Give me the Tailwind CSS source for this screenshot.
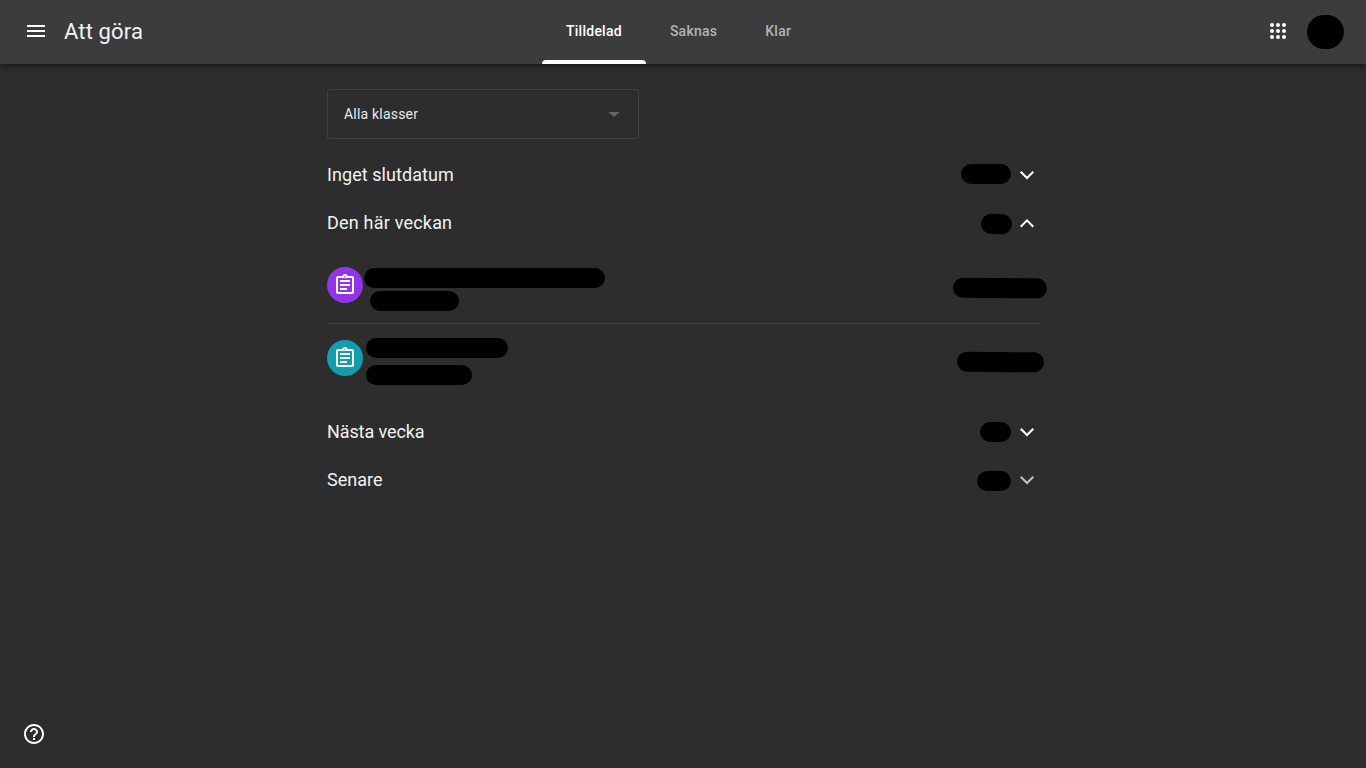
<!DOCTYPE html>
<html lang="sv">
<head>
    <meta charset="UTF-8">
    <meta name="viewport" content="width=device-width, initial-scale=1.0">
    <title>Att göra</title>
    <script src="https://cdn.jsdelivr.net/npm/@tailwindcss/browser@4"></script>
</head>
<body class="bg-[#2d2d2d] font-['Roboto','Liberation_Sans',sans-serif] text-[#f1f3f4] h-[768px] overflow-hidden">
    <!-- Top bar -->
    <header class="relative z-10 flex items-start h-16 bg-[#3c3c3c] shadow-[0_2px_6px_rgba(0,0,0,0.5)]">
        <div class="flex items-center w-[542px] h-[62px] pl-6">
            <svg class="w-6 h-6 text-white" viewBox="0 0 24 24" fill="currentColor"><path d="M3 18h18v-2H3v2zm0-5h18v-2H3v2zm0-7v2h18V6H3z"/></svg>
            <span class="ml-4 mt-[2px] text-[22px] leading-7 tracking-[0.15px] text-[#f1f3f4]">Att göra</span>
        </div>
        <nav class="flex h-16 text-sm font-medium tracking-[0.25px]">
            <a class="relative flex items-center h-[62px] px-6 text-white">
                Tilldelad
                <span class="absolute left-0 right-0 top-[60px] h-1 bg-white rounded-t-[4px]"></span>
            </a>
            <a class="flex items-center h-[62px] px-6 text-[#b0b3b6]">Saknas</a>
            <a class="flex items-center h-[62px] px-6 text-[#b0b3b6]">Klar</a>
        </nav>
        <div class="flex items-center ml-auto h-[62px] pr-[22px]">
            <svg class="w-6 h-6 text-white" viewBox="0 0 24 24" fill="currentColor"><circle cx="6" cy="6" r="2"/><circle cx="12" cy="6" r="2"/><circle cx="18" cy="6" r="2"/><circle cx="6" cy="12" r="2"/><circle cx="12" cy="12" r="2"/><circle cx="18" cy="12" r="2"/><circle cx="6" cy="18" r="2"/><circle cx="12" cy="18" r="2"/><circle cx="18" cy="18" r="2"/></svg>
            <div class="w-[37px] h-[34px] ml-[17px] mt-[2px] bg-black rounded-full"></div>
        </div>
    </header>

    <main class="w-[713px] ml-[327px] pt-[25px]">
        <!-- Class filter -->
        <div class="flex items-center justify-between w-[312px] h-[50px] pl-4 pr-[18px] border border-[#404040] rounded-[2px]">
            <span class="text-sm tracking-[0.2px] text-[#e8eaed]">Alla klasser</span>
            <span class="w-0 h-0 border-x-[6px] border-x-transparent border-t-[5px] border-t-[#5f6368]"></span>
        </div>

        <!-- Inget slutdatum -->
        <div class="flex items-center justify-between h-12 mt-[12px]">
            <span class="text-lg tracking-[0.07px]">Inget slutdatum</span>
            <div class="flex items-center pr-[1px]">
                <div class="w-[50px] h-5 mb-[2px] bg-black rounded-full"></div>
                <svg class="w-6 h-6 ml-1 text-white" viewBox="0 0 24 24" fill="currentColor"><path d="M6.41 8 12 13.59 17.59 8 19 9.41l-7 7-7-7z"/></svg>
            </div>
        </div>

        <!-- Den här veckan -->
        <div class="flex items-center justify-between h-12">
            <span class="text-lg tracking-[0.2px]">Den här veckan</span>
            <div class="flex items-center pr-[1px]">
                <div class="w-[31px] h-5 mt-[1px] bg-black rounded-full rotate-[2deg]"></div>
                <svg class="w-6 h-6 ml-[3px] text-white" viewBox="0 0 24 24" fill="currentColor"><path d="M6.41 16.41 12 10.83l5.59 5.58L19 15l-7-7-7 7z"/></svg>
            </div>
        </div>

        <!-- Assignments -->
        <div class="flex items-center h-[77px] border-b border-[#444444]">
            <div class="flex items-center justify-center w-9 h-9 rounded-full bg-[#9334e6] shrink-0">
                <svg class="w-6 h-6 text-white" viewBox="0 0 24 24" fill="currentColor"><path d="M19 3h-4.18C14.4 1.84 13.3 1 12 1s-2.4.84-2.82 2H5c-1.1 0-2 .9-2 2v14c0 1.1.9 2 2 2h14c1.1 0 2-.9 2-2V5c0-1.1-.9-2-2-2zm-7-.25c.41 0 .75.34.75.75s-.34.75-.75.75-.75-.34-.75-.75.34-.75.75-.75zM19 19H5V5h14v14zM7 15h7v2H7zm0-4h10v2H7zm0-4h10v2H7z"/></svg>
            </div>
            <div class="flex flex-col gap-[3px] ml-px mb-[-9px]">
                <div class="w-[241px] h-5 bg-black rounded-full"></div>
                <div class="w-[89px] h-5 ml-[6px] bg-black rounded-full"></div>
            </div>
            <div class="w-[94px] h-5 ml-auto mr-[-7px] mt-[5px] bg-black rounded-full rotate-[0.5deg]"></div>
        </div>
        <div class="flex items-center h-[84px]">
            <div class="flex items-center justify-center w-9 h-9 mb-[16px] rounded-full bg-[#129eaf] shrink-0">
                <svg class="w-6 h-6 text-white" viewBox="0 0 24 24" fill="currentColor"><path d="M19 3h-4.18C14.4 1.84 13.3 1 12 1s-2.4.84-2.82 2H5c-1.1 0-2 .9-2 2v14c0 1.1.9 2 2 2h14c1.1 0 2-.9 2-2V5c0-1.1-.9-2-2-2zm-7-.25c.41 0 .75.34.75.75s-.34.75-.75.75-.75-.34-.75-.75.34-.75.75-.75zM19 19H5V5h14v14zM7 15h7v2H7zm0-4h10v2H7zm0-4h10v2H7z"/></svg>
            </div>
            <div class="flex flex-col gap-[7px] ml-[3px] mb-[9px]">
                <div class="w-[142px] h-5 bg-black rounded-full"></div>
                <div class="w-[106px] h-5 bg-black rounded-full"></div>
            </div>
            <div class="w-[87px] h-5 ml-auto mr-[-4px] mb-[9px] bg-black rounded-full rotate-[0.5deg]"></div>
        </div>

        <!-- Nästa vecka -->
        <div class="flex items-center justify-between h-12">
            <span class="text-lg tracking-[-0.1px]">Nästa vecka</span>
            <div class="flex items-center pr-[1px]">
                <div class="w-[31px] h-5 bg-black rounded-full"></div>
                <svg class="w-6 h-6 ml-1 text-white" viewBox="0 0 24 24" fill="currentColor"><path d="M6.41 8 12 13.59 17.59 8 19 9.41l-7 7-7-7z"/></svg>
            </div>
        </div>

        <!-- Senare -->
        <div class="flex items-center justify-between h-12">
            <span class="text-lg">Senare</span>
            <div class="flex items-center pr-[1px]">
                <div class="w-[34px] h-5 mt-[2px] bg-black rounded-full"></div>
                <svg class="w-6 h-6 ml-1 text-[#bdc1c6]" viewBox="0 0 24 24" fill="currentColor"><path d="M6.41 8 12 13.59 17.59 8 19 9.41l-7 7-7-7z"/></svg>
            </div>
        </div>
    </main>

    <!-- Help -->
    <svg class="fixed left-[22px] top-[722px] w-6 h-6 text-white" viewBox="0 0 24 24" fill="currentColor"><path d="M11 18h2v-2h-2v2zm1-16C6.48 2 2 6.48 2 12s4.48 10 10 10 10-4.48 10-10S17.52 2 12 2zm0 18c-4.41 0-8-3.59-8-8s3.59-8 8-8 8 3.59 8 8-3.59 8-8 8zm0-14c-2.21 0-4 1.79-4 4h2c0-1.1.9-2 2-2s2 .9 2 2c0 2-3 1.75-3 5h2c0-2.25 3-2.5 3-5 0-2.21-1.79-4-4-4z"/></svg>
</body>
</html>
